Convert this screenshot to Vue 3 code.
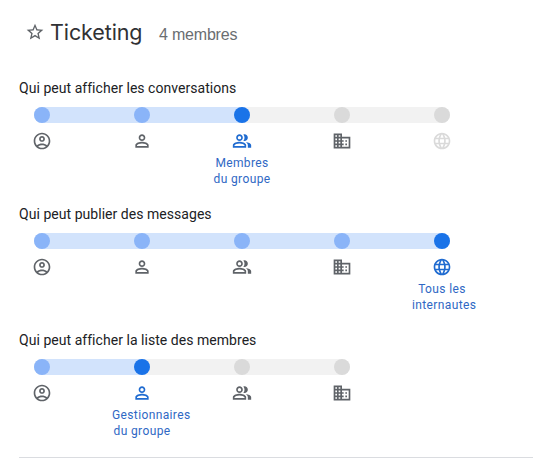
<script setup>
const icons = {
    compte: 'M12 2C6.48 2 2 6.48 2 12s4.48 10 10 10 10-4.48 10-10S17.52 2 12 2zM7.35 18.5C8.66 17.56 10.26 17 12 17s3.34.56 4.65 1.5C15.34 19.44 13.74 20 12 20s-3.34-.56-4.65-1.5zm10.79-1.38C16.45 15.8 14.32 15 12 15s-4.45.8-6.14 2.12C4.7 15.73 4 13.95 4 12c0-4.42 3.58-8 8-8s8 3.58 8 8c0 1.95-.7 3.73-1.86 5.12zM12 6c-1.93 0-3.5 1.57-3.5 3.5S10.07 13 12 13s3.5-1.57 3.5-3.5S13.93 6 12 6zm0 5c-.83 0-1.5-.67-1.5-1.5S11.17 8 12 8s1.5.67 1.5 1.5S12.83 11 12 11z',
    personne: 'M12 6c1.1 0 2 .9 2 2s-.9 2-2 2-2-.9-2-2 .9-2 2-2m0 9c2.7 0 5.8 1.29 6 2v1H6v-.99c.2-.72 3.3-2.01 6-2.01m0-11C9.79 4 8 5.79 8 8s1.79 4 4 4 4-1.79 4-4-1.79-4-4-4zm0 9c-2.67 0-8 1.34-8 4v3h16v-3c0-2.66-5.33-4-8-4z',
    groupe: 'M16.67 13.13C18.04 14.06 19 15.32 19 17v3h4v-3c0-2.18-3.57-3.47-6.33-3.87zM15 12c2.21 0 4-1.79 4-4s-1.79-4-4-4c-.47 0-.91.1-1.33.24C14.5 5.27 15 6.58 15 8s-.5 2.73-1.33 3.76c.42.14.86.24 1.33.24zM9 12c2.21 0 4-1.79 4-4s-1.79-4-4-4-4 1.79-4 4 1.79 4 4 4zm0-6c1.1 0 2 .9 2 2s-.9 2-2 2-2-.9-2-2 .9-2 2-2zm0 7c-2.67 0-8 1.34-8 4v3h16v-3c0-2.66-5.33-4-8-4zm6 5H3v-.99C3.2 16.29 6.3 15 9 15s5.8 1.29 6 2v1z',
    organisation: 'M12 7V3H2v18h20V7H12zM6 19H4v-2h2v2zm0-4H4v-2h2v2zm0-4H4V9h2v2zm0-4H4V5h2v2zm4 12H8v-2h2v2zm0-4H8v-2h2v2zm0-4H8V9h2v2zm0-4H8V5h2v2zm10 12h-8v-2h2v-2h-2v-2h2v-2h-2V9h8v10zm-2-8h-2v2h2v-2zm0 4h-2v2h2v-2z',
    web: 'M11.99 2C6.47 2 2 6.48 2 12s4.47 10 9.99 10C17.52 22 22 17.52 22 12S17.52 2 11.99 2zm6.93 6h-2.95c-.32-1.25-.78-2.45-1.38-3.56 1.84.63 3.37 1.91 4.33 3.56zM12 4.04c.83 1.2 1.48 2.53 1.91 3.96h-3.82c.43-1.43 1.08-2.76 1.91-3.96zM4.26 14C4.1 13.36 4 12.69 4 12s.1-1.36.26-2h3.38c-.08.66-.14 1.32-.14 2s.06 1.34.14 2H4.26zm.82 2h2.95c.32 1.25.78 2.45 1.38 3.56-1.84-.63-3.37-1.9-4.33-3.56zm2.95-8H5.08c.96-1.66 2.49-2.93 4.33-3.56C8.81 5.55 8.35 6.75 8.03 8zM12 19.96c-.83-1.2-1.48-2.53-1.91-3.96h3.82c-.43 1.43-1.08 2.76-1.91 3.96zM14.34 14H9.66c-.09-.66-.16-1.32-.16-2s.07-1.35.16-2h4.68c.09.65.16 1.32.16 2s-.07 1.34-.16 2zm.25 5.56c.6-1.11 1.06-2.31 1.38-3.56h2.95c-.96 1.65-2.49 2.93-4.33 3.56zM16.36 14c.08-.66.14-1.32.14-2s-.06-1.34-.14-2h3.38c.16.64.26 1.31.26 2s-.1 1.36-.26 2h-3.38z',
};

const reglages = [
    {
        titre: 'Qui peut afficher les conversations',
        niveaux: ['compte', 'personne', 'groupe', 'organisation', 'web'],
        actif: 2,
        libelle: 'Membres du groupe',
        indisponible: 'web',
    },
    {
        titre: 'Qui peut publier des messages',
        niveaux: ['compte', 'personne', 'groupe', 'organisation', 'web'],
        actif: 4,
        libelle: 'Tous les internautes',
    },
    {
        titre: 'Qui peut afficher la liste des membres',
        niveaux: ['compte', 'personne', 'groupe', 'organisation'],
        actif: 1,
        libelle: 'Gestionnaires du groupe',
    },
];

// 100px entre deux crans, 16px pour un cran
const largeur = (crans) => `${crans * 100 + 16}px`;
</script>

<template>
    <div class="page">
        <header class="entete">
            <svg class="etoile" viewBox="0 0 24 24">
                <path d="M22 9.24l-7.19-.62L12 2 9.19 8.63 2 9.24l5.46 4.73L5.82 21 12 17.27 18.18 21l-1.63-7.03L22 9.24zM12 15.4l-3.76 2.27 1-4.28-3.32-2.88 4.38-.38L12 6.1l1.71 4.04 4.38.38-3.32 2.88 1 4.28L12 15.4z" />
            </svg>
            <h1 class="nom">Ticketing</h1>
            <span class="membres">4 membres</span>
        </header>

        <section v-for="reglage in reglages" :key="reglage.titre" class="reglage">
            <h2 class="titre">{{ reglage.titre }}</h2>

            <div class="piste" :style="{ width: largeur(reglage.niveaux.length - 1) }">
                <div class="remplissage" :style="{ width: largeur(reglage.actif) }">
                    <span
                        v-for="n in reglage.actif + 1"
                        :key="n"
                        class="cran"
                        :class="n - 1 === reglage.actif ? 'cran-actif' : 'cran-inclus'"
                    ></span>
                </div>
                <span v-for="n in reglage.niveaux.length - 1 - reglage.actif" :key="n" class="cran"></span>
            </div>

            <div class="niveaux">
                <div
                    v-for="(niveau, index) in reglage.niveaux"
                    :key="niveau"
                    class="niveau"
                    :class="{ actif: index === reglage.actif, indisponible: niveau === reglage.indisponible }"
                >
                    <svg class="icone" viewBox="0 0 24 24"><path :d="icons[niveau]" /></svg>
                    <p v-if="index === reglage.actif" class="libelle">{{ reglage.libelle }}</p>
                </div>
            </div>
        </section>

        <div class="separateur"></div>
    </div>
</template>

<style>
body {
    background-color: #ffffff;
}
</style>

<style scoped>
.page {
    height: 463px;
    overflow: hidden;
    font-family: Roboto, "Liberation Sans", sans-serif;
    color: #202124;
}

.entete {
    display: flex;
    align-items: baseline;
    height: 58px;
    padding: 18px 0 0 25px;
    box-sizing: border-box;
    margin-bottom: 21px;
}

.etoile {
    width: 20px;
    height: 20px;
    margin-right: 5px;
    align-self: flex-start;
    margin-top: 4px;
    fill: #5f6368;
}

.nom {
    margin: 0;
    width: 109px;
    font-family: Inter, sans-serif;
    font-size: 21.5px;
    font-weight: 400;
    line-height: 28px;
    letter-spacing: -0.1px;
    color: #303134;
}

.membres {
    font-family: "Liberation Sans", sans-serif;
    font-size: 16px;
    letter-spacing: -0.2px;
    color: #6a6d71;
}

.reglage {
    height: 126px;
}

.titre {
    margin: 0 0 10px 19px;
    font-size: 14px;
    font-weight: 400;
    line-height: 18px;
    letter-spacing: 0.04px;
}

.piste {
    display: flex;
    gap: 84px;
    height: 16px;
    margin-left: 34px;
    border-radius: 8px;
    background-color: #f2f2f2;
}

.remplissage {
    display: flex;
    flex-shrink: 0;
    justify-content: space-between;
    border-radius: 8px;
    background-color: #d2e3fc;
}

.cran {
    flex-shrink: 0;
    width: 16px;
    height: 16px;
    border-radius: 50%;
    background-color: #dadada;
}

.cran-inclus {
    background-color: #8ab4f8;
}

.cran-actif {
    background-color: #1a73e8;
}

.niveaux {
    display: flex;
    gap: 40px;
    padding: 8px 0 0 12px;
}

.niveau {
    width: 60px;
    text-align: center;
    color: #5f6368;
}

.niveau.actif {
    color: #1f6bd0;
}

.niveau.indisponible {
    color: #dadada;
}

.icone {
    display: block;
    width: 20px;
    height: 20px;
    margin: 0 auto;
    fill: currentColor;
}

.libelle {
    margin: 4px 0 0;
    font-size: 12px;
    line-height: 16px;
    letter-spacing: 0.37px;
    color: #2f68c4;
}

.separateur {
    height: 1px;
    margin-left: 19px;
    background-color: #dadce0;
}
</style>
